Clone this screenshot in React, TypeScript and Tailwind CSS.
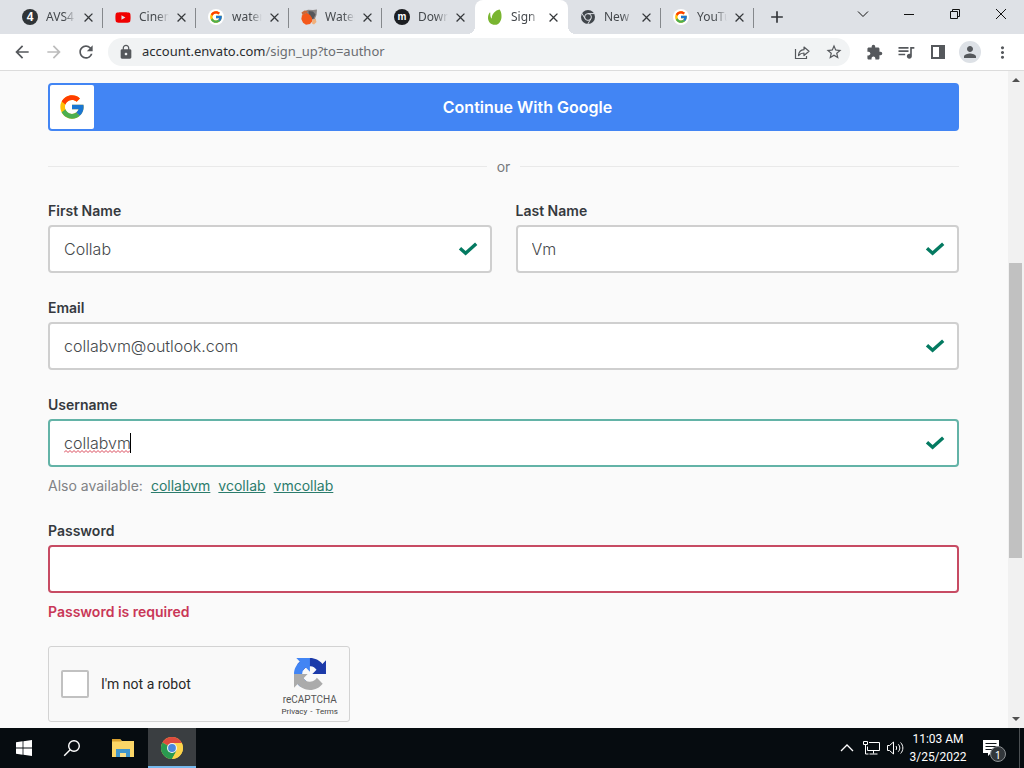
import { useId, type ReactNode } from "react";
import { FaYoutube } from "react-icons/fa";
import { FcGoogle } from "react-icons/fc";
import {
  MdArrowBack,
  MdArrowForward,
  MdClose,
  MdExtension,
  MdLock,
  MdMoreVert,
  MdPerson,
  MdQueueMusic,
  MdRefresh,
  MdStarBorder,
  MdAdd,
} from "react-icons/md";

/* ---------- favicons ---------- */

function AvsIcon() {
  return (
    <span className="flex size-4 items-center justify-center rounded-full bg-[#2f3437] font-['Liberation_Sans',sans-serif] text-[12px] leading-none font-bold text-white">
      4
    </span>
  );
}

function MIcon() {
  return (
    <span className="flex size-4 items-center justify-center rounded-full bg-[#1c1e22] pb-px font-['Liberation_Sans',sans-serif] text-[10px] leading-none font-bold text-white">
      m
    </span>
  );
}

function GoogleIcon() {
  return (
    <span className="flex size-4 items-center justify-center rounded-full bg-white">
      <FcGoogle size={14} />
    </span>
  );
}

function WaterfoxIcon() {
  return (
    <svg viewBox="0 0 16 16" className="size-4">
      <path d="M3 2.500 7 .800l5 .2 4-.5-.5 5.500-1.500 3.500.8 1.500-4.800-1z" fill="#8a8585" />
      <path d="M7.500 2 12 2.500l2.500 3L12 10.500 8 8z" fill="#55565a" />
      <path d="M3 4.500 6 4l3 2 2 3 .5 3-2.500 3-4 .8-3-2L.300 10 1 6.500z" fill="#f4581a" />
      <path d="M.500 3.500 3.500 1.500 7 2 5 4.500 1.500 6z" fill="#c96a3c" />
      <path d="m11.500 11 3-1.500 1 3.500-2.500 2.500-2-1z" fill="#f0b07c" />
    </svg>
  );
}

function LeafIcon() {
  return (
    <svg viewBox="0 0 16 16" className="size-4">
      <path
        d="M12.400.4C13.500 1 14.800 4.500 14.500 8.200c-.3 4-2.600 7.400-6.300 7.600C4.200 16 1.200 13.200 1 9.300 1 6.800 1.600 5 2.600 3.700c.4-.4.8-.2.7.3-.2 2 .2 4 1 5.300.2.300.500.200.500-.200C4.900 4.700 8.500 1.200 12.400.4z"
        fill="#79b530"
      />
    </svg>
  );
}

function GreyChromeIcon() {
  return (
    <svg viewBox="0 0 16 16" className="size-4">
      <circle cx="8" cy="8" r="7" fill="#41464b" />
      <g fill="none" stroke="#dee1e6" strokeWidth="1">
        <circle cx="8" cy="8" r="3.400" />
        <path d="M8 4.600h6.500M5.100 9.700 1.800 4.200M10.900 9.700l-3.200 5.500" />
      </g>
    </svg>
  );
}

function ChromeIcon() {
  return (
    <svg viewBox="0 0 48 48" className="size-6">
      <circle cx="24" cy="24" r="22" fill="#fcd34a" />
      <path d="M24 24 4.900 13A22 22 0 0 1 43.100 13z" fill="#dd4b3e" />
      <path d="M4.900 13A22 22 0 0 0 24 46L33.500 29.500 24 24z" fill="#2a9a50" />
      <path d="M24 14h19.600a22 22 0 0 0-.5-1L24 12z" fill="#dd4b3e" />
      <path d="M24 14h19.600A22 22 0 0 1 24 46l9-16.500z" fill="#fcd34a" />
      <circle cx="24" cy="24" r="10" fill="#f4f4f4" />
      <circle cx="24" cy="24" r="7.800" fill="#4a86dc" />
    </svg>
  );
}

/* ---------- tab strip ---------- */

type Tab = { title: string; icon: ReactNode; active?: boolean; divider?: boolean };

const tabs: Tab[] = [
  { title: "AVS4", icon: <AvsIcon />, divider: true },
  { title: "Cinem", icon: <FaYoutube size={17} color="#f00000" />, divider: true },
  { title: "water", icon: <GoogleIcon />, divider: true },
  { title: "Water", icon: <WaterfoxIcon />, divider: true },
  { title: "Down", icon: <MIcon /> },
  { title: "Sign", icon: <LeafIcon />, active: true },
  { title: "New", icon: <GreyChromeIcon />, divider: true },
  { title: "YouTu", icon: <GoogleIcon />, divider: true },
];

function BrowserTab({ title, icon, active, divider }: Tab) {
  return (
    <li
      className={
        active
          ? "relative flex h-full w-[93px] items-center rounded-t-lg bg-white pr-[7px] pl-3"
          : "relative flex h-full w-[93px] items-center pr-[7px] pl-3"
      }
    >
      {active && (
        <>
          <span className="absolute bottom-0 -left-2 size-2 bg-[radial-gradient(circle_at_0_0,transparent_8px,white_8px)]" />
          <span className="absolute -right-2 bottom-0 size-2 bg-[radial-gradient(circle_at_100%_0,transparent_8px,white_8px)]" />
        </>
      )}
      <span className="flex size-4 shrink-0 items-center justify-center">{icon}</span>
      <span className="ml-2 w-[30px] overflow-hidden mask-r-from-60% text-[12px] whitespace-nowrap text-[#45494d]">
        {title}
      </span>
      <button aria-label="Close tab" className="ml-auto flex size-4 items-center justify-center text-[#35383b]">
        <MdClose size={15} />
      </button>
      {divider && <span className="absolute top-2 right-0 h-5 w-px bg-[#85888c]" />}
    </li>
  );
}

function TabStrip() {
  return (
    <header className="flex h-[34px] shrink-0 bg-[#dee1e6]">
      <ul className="flex pl-[10px]">
        {tabs.map((tab, i) => (
          <BrowserTab key={i} {...tab} />
        ))}
      </ul>
      <button aria-label="New tab" className="flex w-[46px] items-center justify-center text-[#33363a]">
        <MdAdd size={20} />
      </button>
      <div className="ml-auto flex h-7 text-[#111]">
        <button aria-label="Search tabs" className="flex w-[46px] items-center justify-center">
          <svg viewBox="0 0 12 12" className="size-3" fill="none" stroke="currentColor">
            <path d="m1 3.500 5 5 5-5" />
          </svg>
        </button>
        <button aria-label="Minimize" className="flex w-[46px] items-center justify-center">
          <svg viewBox="0 0 12 12" className="size-3" fill="none" stroke="currentColor">
            <path d="M1 6.500h10" />
          </svg>
        </button>
        <button aria-label="Restore" className="flex w-[46px] items-center justify-center">
          <svg viewBox="0 0 12 12" className="size-3" fill="none" stroke="currentColor">
            <path d="M1.500 3.500h7v7h-7zM3.500 3.500v-2h7v7h-2" />
          </svg>
        </button>
        <button aria-label="Close" className="flex w-[46px] items-center justify-center">
          <svg viewBox="0 0 12 12" className="size-3" fill="none" stroke="currentColor">
            <path d="m1 1 10 10M11 1 1 11" />
          </svg>
        </button>
      </div>
    </header>
  );
}

/* ---------- toolbar ---------- */

function ToolButton({ label, children }: { label: string; children: ReactNode }) {
  return (
    <button aria-label={label} className="flex h-7 w-8 items-center justify-center">
      {children}
    </button>
  );
}

function Toolbar() {
  return (
    <nav className="flex h-[37px] shrink-0 items-center border-b border-[#dcdcdc] bg-white px-1.5 text-[#55585c]">
      <ToolButton label="Back">
        <MdArrowBack size={20} />
      </ToolButton>
      <span className="flex text-[#bcbcbc]">
        <ToolButton label="Forward">
          <MdArrowForward size={20} />
        </ToolButton>
      </span>
      <ToolButton label="Reload">
        <MdRefresh size={20} />
      </ToolButton>
      <div className="ml-1.5 flex h-7 flex-1 items-center rounded-full bg-[#f1f3f4] pl-2.5">
        <MdLock size={16} />
        <p className="ml-2 flex-1 text-[13px] text-[#6a6d71]">
          <span className="text-[#2a2c2f]">account.envato.com</span>/sign_up?to=author
        </p>
        <ToolButton label="Share">
          <svg viewBox="0 0 16 16" className="size-4" fill="none" stroke="currentColor" strokeWidth="1.200">
            <path d="M1.500 5v9.500h11V12" />
            <path
              d="M4.500 11.500c.3-3.600 2.300-5.600 5.500-5.800V3l5 4.300-5 4.200V9C7.600 9 6 9.800 4.500 11.500z"
              strokeLinejoin="round"
            />
          </svg>
        </ToolButton>
        <ToolButton label="Bookmark">
          <MdStarBorder size={18} />
        </ToolButton>
      </div>
      <div className="ml-2 flex">
        <ToolButton label="Extensions">
          <MdExtension size={17} />
        </ToolButton>
        <ToolButton label="Media">
          <MdQueueMusic size={20} />
        </ToolButton>
        <ToolButton label="Side panel">
          <svg viewBox="0 0 14 14" className="size-3.5">
            <path d="M0 0h14v14H0zM2 2v10h6V2z" fill="currentColor" fillRule="evenodd" />
          </svg>
        </ToolButton>
        <ToolButton label="Profile">
          <span className="flex size-[22px] items-center justify-center rounded-full bg-[#dde1e6]">
            <MdPerson size={18} />
          </span>
        </ToolButton>
        <ToolButton label="Menu">
          <MdMoreVert size={19} />
        </ToolButton>
      </div>
    </nav>
  );
}

/* ---------- form ---------- */

function Check() {
  return (
    <svg viewBox="0 0 20 16" className="h-4 w-5 shrink-0" fill="none" stroke="#047a61" strokeWidth="3.400">
      <path d="m2 7.200 5.600 5L18.200 2.800" />
    </svg>
  );
}

type FieldProps = {
  label: string;
  value?: string;
  type?: string;
  state?: "valid" | "focused" | "error";
  children?: ReactNode;
};

const borders = {
  valid: "border-[#cfcfcf]",
  focused: "border-[#63b3a7]",
  error: "border-[#c74b63]",
};

function Field({ label, value = "", type = "text", state = "valid", children }: FieldProps) {
  const id = useId();
  return (
    <div>
      <label htmlFor={id} className="mb-1 block text-[14px] leading-[21px] font-semibold text-[#35393e]">
        {label}
      </label>
      <div className={`relative flex h-12 items-center rounded-[4px] border-2 bg-white pr-3 pl-3.5 ${borders[state]}`}>
        <input
          id={id}
          type={type}
          defaultValue={value}
          className="h-full min-w-0 flex-1 bg-transparent text-[16px] font-light text-[#45484b] outline-none"
        />
        {state === "focused" && (
          <span className="pointer-events-none absolute top-3 left-3.5 flex h-5 w-[67px] items-end border-r border-black">
            <svg viewBox="0 0 66 3" className="h-[3px] w-[66px]" fill="none" stroke="#d9485a">
              <path d="M0 2.500l2-2 2 2 2-2 2 2 2-2 2 2 2-2 2 2 2-2 2 2 2-2 2 2 2-2 2 2 2-2 2 2 2-2 2 2 2-2 2 2 2-2 2 2 2-2 2 2 2-2 2 2 2-2 2 2 2-2 2 2 2-2 2 2 2-2" />
            </svg>
          </span>
        )}
        {state !== "error" && <Check />}
      </div>
      {children}
    </div>
  );
}

function RecaptchaLogo() {
  return (
    <svg viewBox="0 0 64 64" className="size-8">
      <path
        d="M64 31.955l-.033-1.370V4.687l-7.160 7.160C50.948 4.674 42.033.093 32.050.093c-10.400 0-19.622 4.960-25.458 12.640l11.736 11.860a15.550 15.550 0 0 1 4.754-5.334c2.050-1.600 4.952-2.906 8.968-2.906.485 0 .860.057 1.135.163 4.976.393 9.288 3.140 11.828 7.124l-8.307 8.307L64 31.953"
        fill="#1c3aa9"
      />
      <path
        d="M31.862.094l-1.370.033H4.594l7.160 7.160C4.580 13.147 0 22.060 0 32.046c0 10.400 4.960 19.622 12.640 25.458L24.500 45.768a15.550 15.550 0 0 1-5.334-4.754c-1.600-2.050-2.906-4.952-2.906-8.968 0-.485.057-.860.163-1.135.393-4.976 3.140-9.288 7.124-11.828l8.307 8.307L31.860.095"
        fill="#4285f4"
      />
      <path
        d="M.001 32.045l.033 1.370v25.898l7.160-7.160c5.860 7.173 14.774 11.754 24.760 11.754 10.400 0 19.622-4.960 25.458-12.640l-11.736-11.860a15.550 15.550 0 0 1-4.754 5.334c-2.050 1.600-4.952 2.906-8.968 2.906-.485 0-.860-.057-1.135-.163-4.976-.393-9.288-3.140-11.828-7.124l8.307-8.307c-10.522.040-22.400.066-27.295-.005"
        fill="#ababab"
      />
    </svg>
  );
}

function Recaptcha() {
  return (
    <div className="flex h-[76px] w-[302px] items-center rounded-[3px] border border-[#d3d3d3] bg-[#f9f9f9] pr-[11px] pl-3 font-[Roboto,sans-serif]">
      <input
        id="robot"
        type="checkbox"
        className="size-7 appearance-none rounded-[2px] border-2 border-[#c1c1c1] bg-white"
      />
      <label htmlFor="robot" className="ml-3 text-[14px] text-[#282828]">
        I'm not a robot
      </label>
      <div className="ml-auto flex flex-col items-center pt-2 text-[#555]">
        <RecaptchaLogo />
        <span className="mt-1 text-[10px] leading-3">reCAPTCHA</span>
        <span className="flex gap-[3px] text-[8px] leading-3 text-[#444]">
          <a href="#privacy">Privacy</a>
          <span>-</span>
          <a href="#terms">Terms</a>
        </span>
      </div>
    </div>
  );
}

const suggestions = ["collabvm", "vcollab", "vmcollab"];

function SignUpForm() {
  return (
    <form
      className="flex min-w-0 flex-1 flex-col gap-6 overflow-hidden pt-3 pr-[49px] pl-12 font-[Inter,sans-serif]"
      onSubmit={(e) => e.preventDefault()}
    >
      <button type="button" className="flex h-12 shrink-0 items-center rounded-[4px] bg-[#4285f4] p-0.5">
        <span className="flex size-11 items-center justify-center rounded-[2px] bg-white">
          <FcGoogle size={28} />
        </span>
        <span className="flex-1 pl-1 text-[16px] font-semibold text-white">Continue With Google</span>
      </button>

      <div className="flex items-center gap-2.5 pt-0.5 text-[14px] leading-[19px] text-[#77797c]">
        <span className="h-px flex-1 bg-[#e9e9e9]" />
        or
        <span className="h-px flex-1 bg-[#e9e9e9]" />
      </div>

      <div className="grid grid-cols-2 gap-6">
        <Field label="First Name" value="Collab" />
        <Field label="Last Name" value="Vm" />
      </div>
      <Field label="Email" value="collabvm@outlook.com" />
      <Field label="Username" value="collabvm" state="focused">
        <p className="mt-2 flex gap-2 text-[14px] leading-[21px] text-[#808285]">
          Also available:
          {suggestions.map((name) => (
            <a key={name} href="#username" className="text-[#2b7c6c] underline">
              {name}
            </a>
          ))}
        </p>
      </Field>
      <Field label="Password" type="password" state="error">
        <p className="mt-2 text-[14px] leading-[21px] font-semibold text-[#c93757]">Password is required</p>
      </Field>
      <Recaptcha />
    </form>
  );
}

function ScrollBar() {
  return (
    <div className="flex w-4 shrink-0 flex-col bg-[#f1f1f1]" aria-hidden="true">
      <svg viewBox="0 0 16 17" className="h-[17px] w-4 shrink-0" fill="#505050">
        <path d="m4 11 4-4 4 4z" />
      </svg>
      <div className="flex w-full flex-1 flex-col pl-px">
        <span className="flex-[175]" />
        <span className="w-[13px] flex-[295] bg-[#c1c1c1]" />
        <span className="flex-[153]" />
      </div>
      <svg viewBox="0 0 16 17" className="h-[17px] w-4 shrink-0" fill="#505050">
        <path d="m4 6 4 4 4-4z" />
      </svg>
    </div>
  );
}

/* ---------- taskbar ---------- */

function Taskbar() {
  return (
    <footer className="flex h-10 shrink-0 items-stretch bg-[#060c10] text-white">
      <button aria-label="Start" className="flex w-12 items-center justify-center">
        <svg viewBox="0 0 16 16" className="size-4" fill="currentColor">
          <path d="M0 2.200 6.600 1.300v6.300H0zM7.400 1.200 16 0v7.600H7.400zM0 8.400h6.600v6.300L0 13.800zM7.400 8.400H16V16l-8.600-1.200z" />
        </svg>
      </button>
      <button aria-label="Search" className="flex w-12 items-center justify-center">
        <svg viewBox="0 0 18 18" className="size-[18px]" fill="none" stroke="currentColor" strokeWidth="1.400">
          <circle cx="11" cy="7" r="5.300" />
          <path d="m7.200 10.800-6 6" />
        </svg>
      </button>
      <button aria-label="File Explorer" className="flex w-[52px] items-center justify-center pl-0.5">
        <svg viewBox="0 0 22 18" className="h-[18px] w-[22px]">
          <path d="M0 0h8l2 2h12v16H0z" fill="#fbd667" />
          <path d="M0 0h8l1.500 2.500H0z" fill="#d9a12f" />
          <path d="M4 10h14v8h-4v-4H8v4H4z" fill="#4196cc" />
          <path d="M8 14h6v4H8z" fill="#fbe08a" />
        </svg>
      </button>
      <button
        aria-label="Google Chrome"
        className="flex w-12 items-center justify-center border-b-2 border-[#76b9ed] bg-[#3a3e41] pt-0.5"
      >
        <ChromeIcon />
      </button>

      <div className="ml-auto flex items-center">
        <button aria-label="Hidden icons" className="flex w-6 justify-center">
          <svg viewBox="0 0 14 8" className="h-2 w-3.5" fill="none" stroke="currentColor" strokeWidth="1.300">
            <path d="m1 7 6-6 6 6" />
          </svg>
        </button>
        <button aria-label="Network" className="flex w-6 justify-center">
          <svg viewBox="0 0 17 14" className="h-3.5 w-[17px]" fill="none" stroke="currentColor">
            <path d="M6 1.500h10.500v8h-12v-4M10.500 9.500v3M6.500 13h8" />
            <path d="M.5.500h4v3h-4zM2.500 3.500V13h3" />
          </svg>
        </button>
        <button aria-label="Volume" className="flex w-6 justify-center">
          <svg viewBox="0 0 17 14" className="h-3.5 w-[17px]" fill="none" stroke="currentColor">
            <path d="M.5 4.500h2l4-3.500v12l-4-3.500h-2zM9 5c.8 1.200.8 2.800 0 4M11.300 3.300c2 2.200 2 5.200 0 7.400M13.600 1.500c3 3.200 3 7.800 0 11" />
          </svg>
        </button>
        <p className="w-[62px] text-center font-[Roboto,sans-serif] text-[12px] leading-[18px] whitespace-nowrap">
          11:03 AM
          <br />
          3/25/2022
        </p>
        <button aria-label="Notifications" className="relative flex h-10 w-[50px] items-center justify-center pr-1.5">
          <svg viewBox="0 0 16 16" className="size-4">
            <path d="M0 0h16v13h-8l-3 3v-3H0z" fill="#fff" />
            <path d="M2.500 3.500h11M2.500 6.500h11M2.500 9.500h7" stroke="#10161a" />
          </svg>
          <span className="absolute top-[18px] left-[21px] flex size-4 items-center justify-center rounded-full border border-[#8b8f92] bg-[#32373b] text-[11px] leading-none">
            1
          </span>
        </button>
        <span className="mr-1 h-10 w-px bg-[#4b5053]" />
      </div>
    </footer>
  );
}

export default function App() {
  return (
    <div className="flex h-screen flex-col overflow-hidden bg-[#fafafa] font-['Noto_Sans','Open_Sans',sans-serif]">
      <TabStrip />
      <Toolbar />
      <main className="flex min-h-0 flex-1">
        <SignUpForm />
        <ScrollBar />
      </main>
      <Taskbar />
    </div>
  );
}
